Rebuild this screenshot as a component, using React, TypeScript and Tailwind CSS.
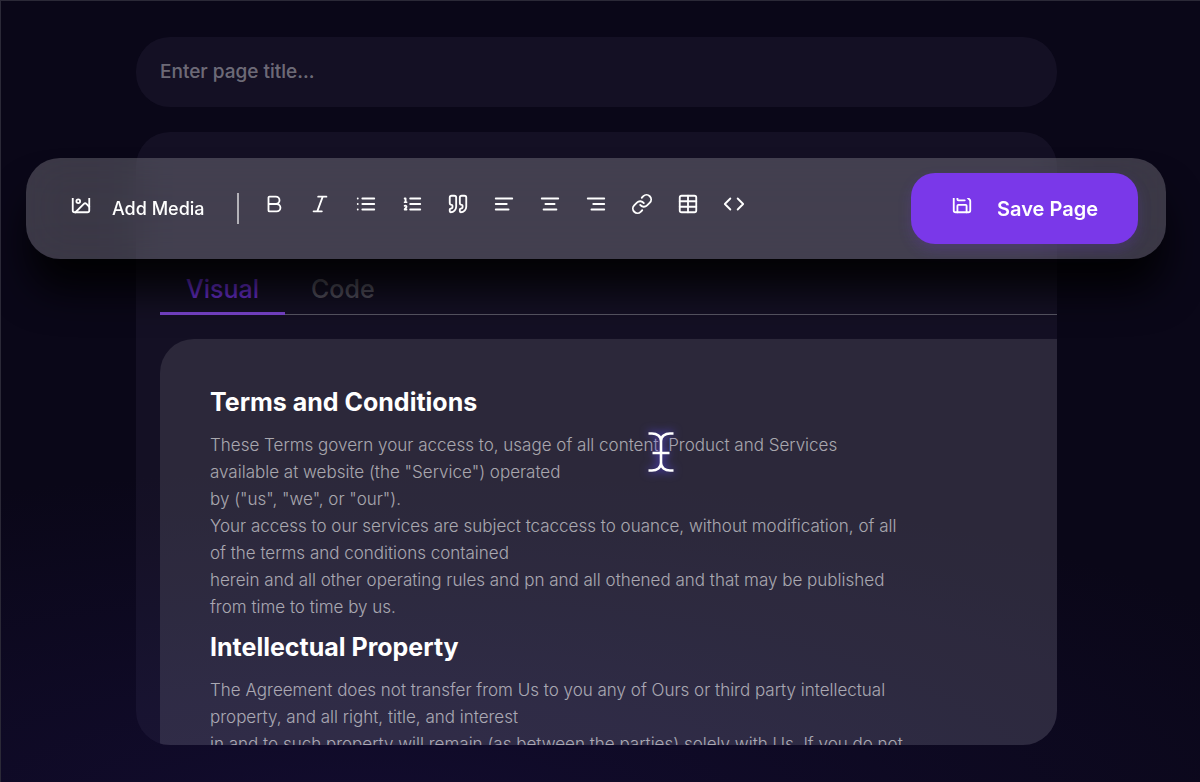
import type { ReactNode } from "react";

function Icon({ children }: { children: ReactNode }) {
  return (
    <svg
      width="22"
      height="22"
      viewBox="0 0 24 24"
      fill="none"
      stroke="currentColor"
      strokeWidth="2"
      strokeLinecap="round"
      strokeLinejoin="round"
      aria-hidden="true"
    >
      {children}
    </svg>
  );
}

function CroppedIcon({ children }: { children: ReactNode }) {
  return (
    <svg
      className="mt-[5px] shrink-0"
      width="22"
      height="17"
      viewBox="0 5.500 24 18.500"
      fill="none"
      stroke="currentColor"
      strokeWidth="2"
      strokeLinecap="round"
      strokeLinejoin="round"
      aria-hidden="true"
    >
      {children}
    </svg>
  );
}

const tools: { label: string; icon: ReactNode }[] = [
  {
    label: "Bold",
    icon: <path d="M6 12h9a4 4 0 0 1 0 8H7a1 1 0 0 1-1-1V5a1 1 0 0 1 1-1h7a4 4 0 0 1 0 8" />,
  },
  { label: "Italic", icon: <path d="M19 4h-9M14 20H5M15 4 9 20" /> },
  { label: "Bulleted list", icon: <path d="M3 6h.01M3 12h.01M3 18h.01M8 6h13M8 12h13M8 18h13" /> },
  {
    label: "Numbered list",
    icon: <path d="M10 6h11M10 12h11M10 18h11M4 6h1v4M4 10h2M6 18H4c0-1 2-2 2-3s-1-1.5-2-1" />,
  },
  {
    label: "Quote",
    icon: (
      <path d="M16 3a2 2 0 0 0-2 2v6a2 2 0 0 0 2 2 1 1 0 0 1 1 1v1a2 2 0 0 1-2 2 1 1 0 0 0-1 1v2a1 1 0 0 0 1 1 6 6 0 0 0 6-6V5a2 2 0 0 0-2-2zM5 3a2 2 0 0 0-2 2v6a2 2 0 0 0 2 2 1 1 0 0 1 1 1v1a2 2 0 0 1-2 2 1 1 0 0 0-1 1v2a1 1 0 0 0 1 1 6 6 0 0 0 6-6V5a2 2 0 0 0-2-2z" />
    ),
  },
  { label: "Align left", icon: <path d="M21 6H3M15 12H3M17 18H3" /> },
  { label: "Align center", icon: <path d="M21 6H3M17 12H7M19 18H5" /> },
  { label: "Align right", icon: <path d="M21 6H3M21 12H9M21 18H7" /> },
  {
    label: "Link",
    icon: (
      <path d="M10 13a5 5 0 0 0 7.54.54l3-3a5 5 0 0 0-7.07-7.07l-1.72 1.71M14 11a5 5 0 0 0-7.54-.54l-3 3a5 5 0 0 0 7.07 7.07l1.71-1.71" />
    ),
  },
  {
    label: "Table",
    icon: (
      <>
        <rect x="3" y="3" width="18" height="18" rx="2" />
        <path d="M12 3v18M3 9h18M3 15h18" />
      </>
    ),
  },
  { label: "Code", icon: <path d="m16 18 6-6-6-6M8 6l-6 6 6 6" /> },
];

function Toolbar() {
  return (
    <div
      role="toolbar"
      aria-label="Formatting"
      className="absolute -left-[110px] -right-[109px] top-[26px] flex items-center rounded-[34px] bg-white/20 py-[15px] pl-11 pr-7 text-white shadow-[0_34px_40px_-4px_rgba(0,0,0,0.9)] backdrop-blur-xl"
    >
      <button type="button" className="flex h-8 items-start gap-5 text-lg leading-8 font-medium">
        <CroppedIcon>
          <rect x="3" y="3" width="18" height="18" rx="2" />
          <circle cx="9" cy="9" r="2" />
          <path d="m21 15-3.086-3.086a2 2 0 0 0-2.828 0L6 21" />
        </CroppedIcon>
        Add Media
      </button>
      <span className="ml-8 mr-6 h-[31px] w-0.5 bg-white/60" />
      <div className="flex gap-6">
        {tools.map((tool) => (
          <button key={tool.label} type="button" aria-label={tool.label} className="flex h-8 items-start">
            <Icon>{tool.icon}</Icon>
          </button>
        ))}
      </div>
      <button
        type="button"
        className="ml-auto flex h-[71px] items-center rounded-[24px] bg-[#7a38e9] px-10 shadow-[0_6px_14px_rgba(122,56,233,0.2)]"
      >
        <span className="flex h-8 items-start gap-6 text-xl leading-8 font-semibold">
          <CroppedIcon>
            <path d="M15.2 3a2 2 0 0 1 1.4.6l3.8 3.8a2 2 0 0 1 .6 1.4V19a2 2 0 0 1-2 2H5a2 2 0 0 1-2-2V5a2 2 0 0 1 2-2z" />
            <path d="M17 21v-7a1 1 0 0 0-1-1H8a1 1 0 0 0-1 1v7M7 3v4a1 1 0 0 0 1 1h7" />
          </CroppedIcon>
          Save Page
        </span>
      </button>
    </div>
  );
}

function TextCursor() {
  return (
    <svg
      className="absolute left-[487px] top-[92px] drop-shadow-[0_0_5px_#5b4bff]"
      width="28"
      height="42"
      viewBox="0 0 28 42"
      fill="none"
      stroke="#fff"
      strokeWidth="2.6"
      aria-hidden="true"
    >
      <path d="M1.5 2.5H5c5 0 9 3 9 7.500v22c0 4.500-4 7.500-9 7.500H1.500M26.500 2.500H23c-5 0-9 3-9 7.500M14 32c0 4.500 4 7.500 9 7.500h3.500M5.500 22h17" />
    </svg>
  );
}

function Document() {
  return (
    <article className="relative flex-1 rounded-tl-[34px] bg-white/10 px-[50px] pt-[47px] text-[17px] leading-[27px] font-light text-white/60">
      <h2 className="mb-3.5 text-[25px] leading-8 font-bold text-white">Terms and Conditions</h2>
      <p className="whitespace-nowrap">
        These Terms govern your access to, usage of all content, Product and Services
        <br />
        available at website (the "Service") operated
        <br />
        by ("us", "we", or "our").
      </p>
      <p className="mb-2.5 whitespace-nowrap">
        Your access to our services are subject tcaccess to ouance, without modification, of all
        <br />
        of the terms and conditions contained
        <br />
        herein and all other operating rules and pn and all othened and that may be published
        <br />
        from time to time by us.
      </p>
      <h2 className="mb-3.5 text-[25px] leading-8 font-bold text-white">Intellectual Property</h2>
      <p className="whitespace-nowrap">
        The Agreement does not transfer from Us to you any of Ours or third party intellectual
        <br />
        property, and all right, title, and interest
        <br />
        in and to such property will remain (as between the parties) solely with Us. If you do not
      </p>
      <TextCursor />
    </article>
  );
}

export default function App() {
  return (
    <main className="flex h-screen flex-col overflow-hidden border-l border-t border-[#2b2937] bg-[#0a0718] bg-[radial-gradient(ellipse_90%_45%_at_30%_105%,#120c2e_0%,transparent_100%)] pb-[37px] pl-[135px] pr-[143px] pt-9 font-['Inter',sans-serif]">
      <input
        type="text"
        aria-label="Page title"
        placeholder="Enter page title..."
        className="h-[70px] w-full shrink-0 rounded-[34px] bg-[#8f80b0]/8 px-6 pb-0.5 text-[19px] font-medium text-white outline-none placeholder:text-white/40"
      />
      <section className="relative mt-[25px] flex min-h-0 flex-1 flex-col">
        <div className="flex min-h-0 flex-1 flex-col overflow-hidden rounded-[34px] bg-[#8f80b0]/8 pl-6 pt-[132px]">
          <div role="tablist" className="flex h-[51px] shrink-0 border-b border-white/30 text-[25px] leading-[50px] font-medium">
            <button
              type="button"
              role="tab"
              aria-selected="true"
              className="-mb-px border-b-[3px] border-[#7a45d0] px-[26px] text-[#6d31d6]"
            >
              Visual
            </button>
            <button type="button" role="tab" aria-selected="false" className="px-[26px] text-white/30">
              Code
            </button>
          </div>
          <div className="mt-6 flex min-h-0 flex-1 flex-col">
            <Document />
          </div>
        </div>
        <Toolbar />
      </section>
    </main>
  );
}
